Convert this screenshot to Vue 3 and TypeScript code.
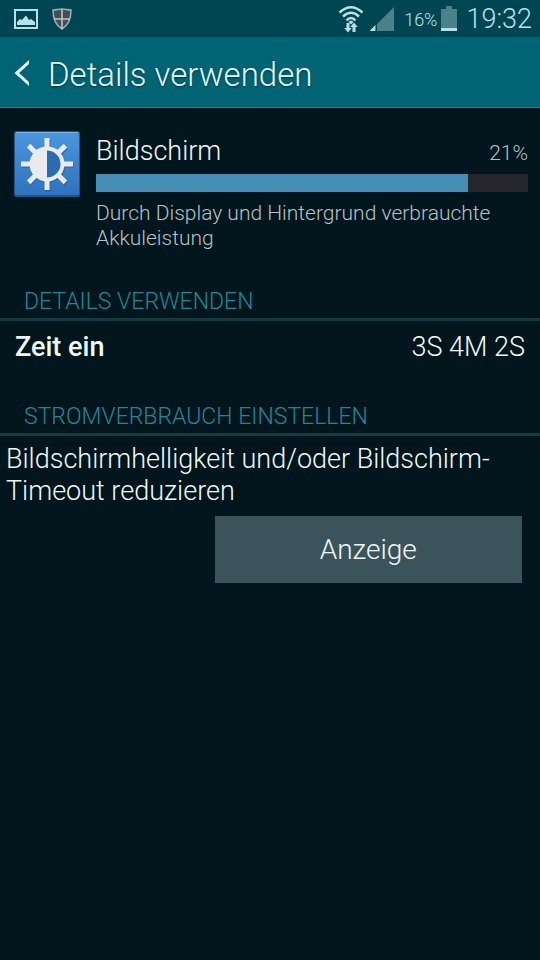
<script setup lang="ts">
interface UsageItem {
  name: string
  share: number
  barFill: number
  description: string
}

const item: UsageItem = {
  name: 'Bildschirm',
  share: 21,
  barFill: 86,
  description: 'Durch Display und Hintergrund verbrauchte Akkuleistung',
}

const rays: number[] = [0, 45, 90, 135, 180, 225, 270, 315]
</script>

<template>
  <div class="screen">
    <div class="status">
      <svg class="picture" width="26" height="22" viewBox="0 0 26 22" aria-hidden="true">
        <rect x="2" y="2" width="22" height="18" fill="none" stroke="#b5e2e8" stroke-width="2" />
        <path d="M4 17v-3l3-3 2 1 4-4.500 3 4.500 2-1 4 3v3z" fill="#b5e2e8" />
      </svg>
      <svg class="shield" width="20" height="22" viewBox="0 0 20 22" aria-hidden="true">
        <path d="M1 2c3 0 6-1 9-1s6 1 9 1c0 8-2 15-9 19C3 17 1 10 1 2z" fill="#484e50" stroke="#9db0b2" stroke-width="1.5" />
        <path d="M10 1v20M2 11h16" fill="none" stroke="#b5cccd" stroke-width="1.5" />
      </svg>
      <span class="spacer"></span>
      <svg class="wifi" width="26" height="28" viewBox="0 0 26 28" aria-hidden="true">
        <g fill="none" stroke="#b5e2e8" stroke-width="2.6">
          <path d="M1.500 7.500Q13-3 24.500 7.500" />
          <path d="M5 11.500Q13 4 21 11.500" />
          <path d="M8.500 15.500Q13 10.500 17.500 15.500" />
        </g>
        <path d="M10.500 17Q13 14.500 15.500 17L13 19.500z" fill="#b5e2e8" />
        <path d="M8.500 18h3v5h2.200l-3.700 4.500L6.300 23h2.200zM14.500 27v-5h-2.200l3.700-4.500 3.700 4.500h-2.200v5z" fill="#b5e2e8" />
      </svg>
      <svg class="signal" width="24" height="24" viewBox="0 0 24 24" aria-hidden="true">
        <path d="M24 0v24H0z" fill="#4b8288" />
        <path d="M6 18H5.500L0 23.500V24h5.500z" fill="#b5e2e8" />
        <path d="M5.500 17.500h1.500V24H5.500z" fill="#004652" />
      </svg>
      <span class="charge">16%</span>
      <svg class="battery" width="16" height="25" viewBox="0 0 16 25" aria-hidden="true">
        <path d="M5 0h6v3h5v22H0V3h5z" fill="#4b8288" />
        <path d="M0 22h16v3H0z" fill="#b5e2e8" />
      </svg>
      <time class="clock">19:32</time>
    </div>

    <header class="appbar">
      <button class="back" type="button" aria-label="Zurück">
        <svg width="16" height="26" viewBox="0 0 16 26" aria-hidden="true">
          <path d="M15 0v4L5 13l10 9v4L0.500 13z" fill="#e4fbfd" />
        </svg>
      </button>
      <h1>Details verwenden</h1>
    </header>

    <main>
      <section class="usage">
        <svg class="app-icon" width="66" height="66" viewBox="0 0 66 66" aria-hidden="true">
          <defs>
            <linearGradient id="tile" x1="0" y1="0" x2="0" y2="1">
              <stop offset="0" stop-color="#4a97dd" />
              <stop offset="1" stop-color="#2e72bd" />
            </linearGradient>
          </defs>
          <rect width="66" height="66" rx="2" fill="#245387" />
          <rect x="1" y="1" width="64" height="63" rx="2" fill="url(#tile)" />
          <path d="M2 1.500h62" stroke="#74b2e8" />
          <g transform="translate(1 1.500)" fill="#2159a0" opacity=".5">
            <circle cx="33" cy="33" r="17.500" />
            <rect v-for="angle in rays" :key="angle" x="30.500" y="7" width="5" height="10" :transform="`rotate(${angle} 33 33)`" />
          </g>
          <g fill="#e9eaec">
            <rect v-for="angle in rays" :key="angle" x="30.500" y="7" width="5" height="10" :transform="`rotate(${angle} 33 33)`" />
            <circle cx="33" cy="33" r="17.500" />
          </g>
          <path d="M33 19.500a13.500 13.500 0 0 1 0 27z" fill="#2c6bb2" />
        </svg>
        <div class="usage-body">
          <div class="usage-head">
            <h2 id="usage-name">{{ item.name }}</h2>
            <span class="share">{{ item.share }}%</span>
          </div>
          <div class="bar" role="img" aria-labelledby="usage-name">
            <div class="fill" :style="{ width: item.barFill + '%' }"></div>
          </div>
          <p>{{ item.description }}</p>
        </div>
      </section>

      <section>
        <h3>DETAILS VERWENDEN</h3>
        <dl class="row">
          <dt>Zeit ein</dt>
          <dd>3S 4M 2S</dd>
        </dl>
      </section>

      <section>
        <h3>STROMVERBRAUCH EINSTELLEN</h3>
        <p class="advice">Bildschirmhelligkeit und/oder Bildschirm-Timeout reduzieren</p>
        <div class="actions">
          <button class="display" type="button">Anzeige</button>
        </div>
      </section>
    </main>
  </div>
</template>

<style>
body {
  background: #00151c;
}
</style>

<style scoped>
.screen {
  min-height: 100vh;
  background: #00151c;
  color: #f0fafb;
  font-family: Roboto, "Liberation Sans", sans-serif;
  font-weight: 300;
}

h1,
h2,
h3,
p,
dl,
dd {
  margin: 0;
  font-weight: 300;
}

.status {
  display: flex;
  align-items: center;
  height: 37px;
  padding: 0 8px 0 13px;
  background: #004652;
  color: #b5e2e8;
}

.shield {
  margin-left: 13px;
}

.spacer {
  flex: 1;
}

.signal {
  margin-left: 6px;
}

.charge {
  margin-left: 10px;
  padding-top: 2px;
  font-size: 18px;
}

.battery {
  margin-left: 4px;
}

.clock {
  margin-left: 9px;
  font-size: 27px;
}

.appbar {
  display: flex;
  align-items: center;
  gap: 18px;
  box-sizing: border-box;
  height: 71px;
  padding: 2px 14px 0;
  border-bottom: 1px solid #2b7d89;
  background: #006474;
}

.back {
  display: flex;
  padding: 0;
  border: 0;
  background: none;
}

h1 {
  padding-top: 4px;
  color: #e4fbfd;
  font-size: 33px;
  line-height: 40px;
  text-shadow: 0 1px 2px #00323c;
}

.usage {
  display: flex;
  gap: 16px;
  padding: 23px 12px 0 14px;
}

.app-icon {
  flex: none;
}

.usage-body {
  flex: 1;
  min-width: 0;
}

.usage-head {
  display: flex;
  align-items: baseline;
  justify-content: space-between;
  padding-top: 4px;
}

h2 {
  font-size: 27px;
  line-height: 32px;
}

.share {
  color: #b4c3c7;
  font-size: 21px;
}

.bar {
  height: 18px;
  margin-top: 7px;
  background: #25252b;
}

.fill {
  height: 100%;
  background: #468db6;
}

.usage-body p {
  margin-top: 9px;
  color: #b4c3c7;
  font-size: 21px;
  line-height: 25px;
}

h3 {
  margin-top: 38px;
  padding: 0 24px 3px;
  border-bottom: 3px solid #103c44;
  color: #20879a;
  font-size: 23px;
  line-height: 26px;
}

.row {
  display: flex;
  justify-content: space-between;
  padding: 10px 15px 3px;
  font-size: 27px;
  line-height: 32px;
}

dt {
  font-weight: 500;
}

.advice {
  padding: 7px 6px 0;
  font-size: 27px;
  line-height: 32px;
}

.actions {
  display: flex;
  justify-content: flex-end;
  padding: 9px 18px 18px;
}

.display {
  width: 61%;
  height: 67px;
  padding: 0;
  border: 0;
  background: #3b545b;
  color: #f0fafb;
  font: inherit;
  font-size: 28px;
}
</style>
